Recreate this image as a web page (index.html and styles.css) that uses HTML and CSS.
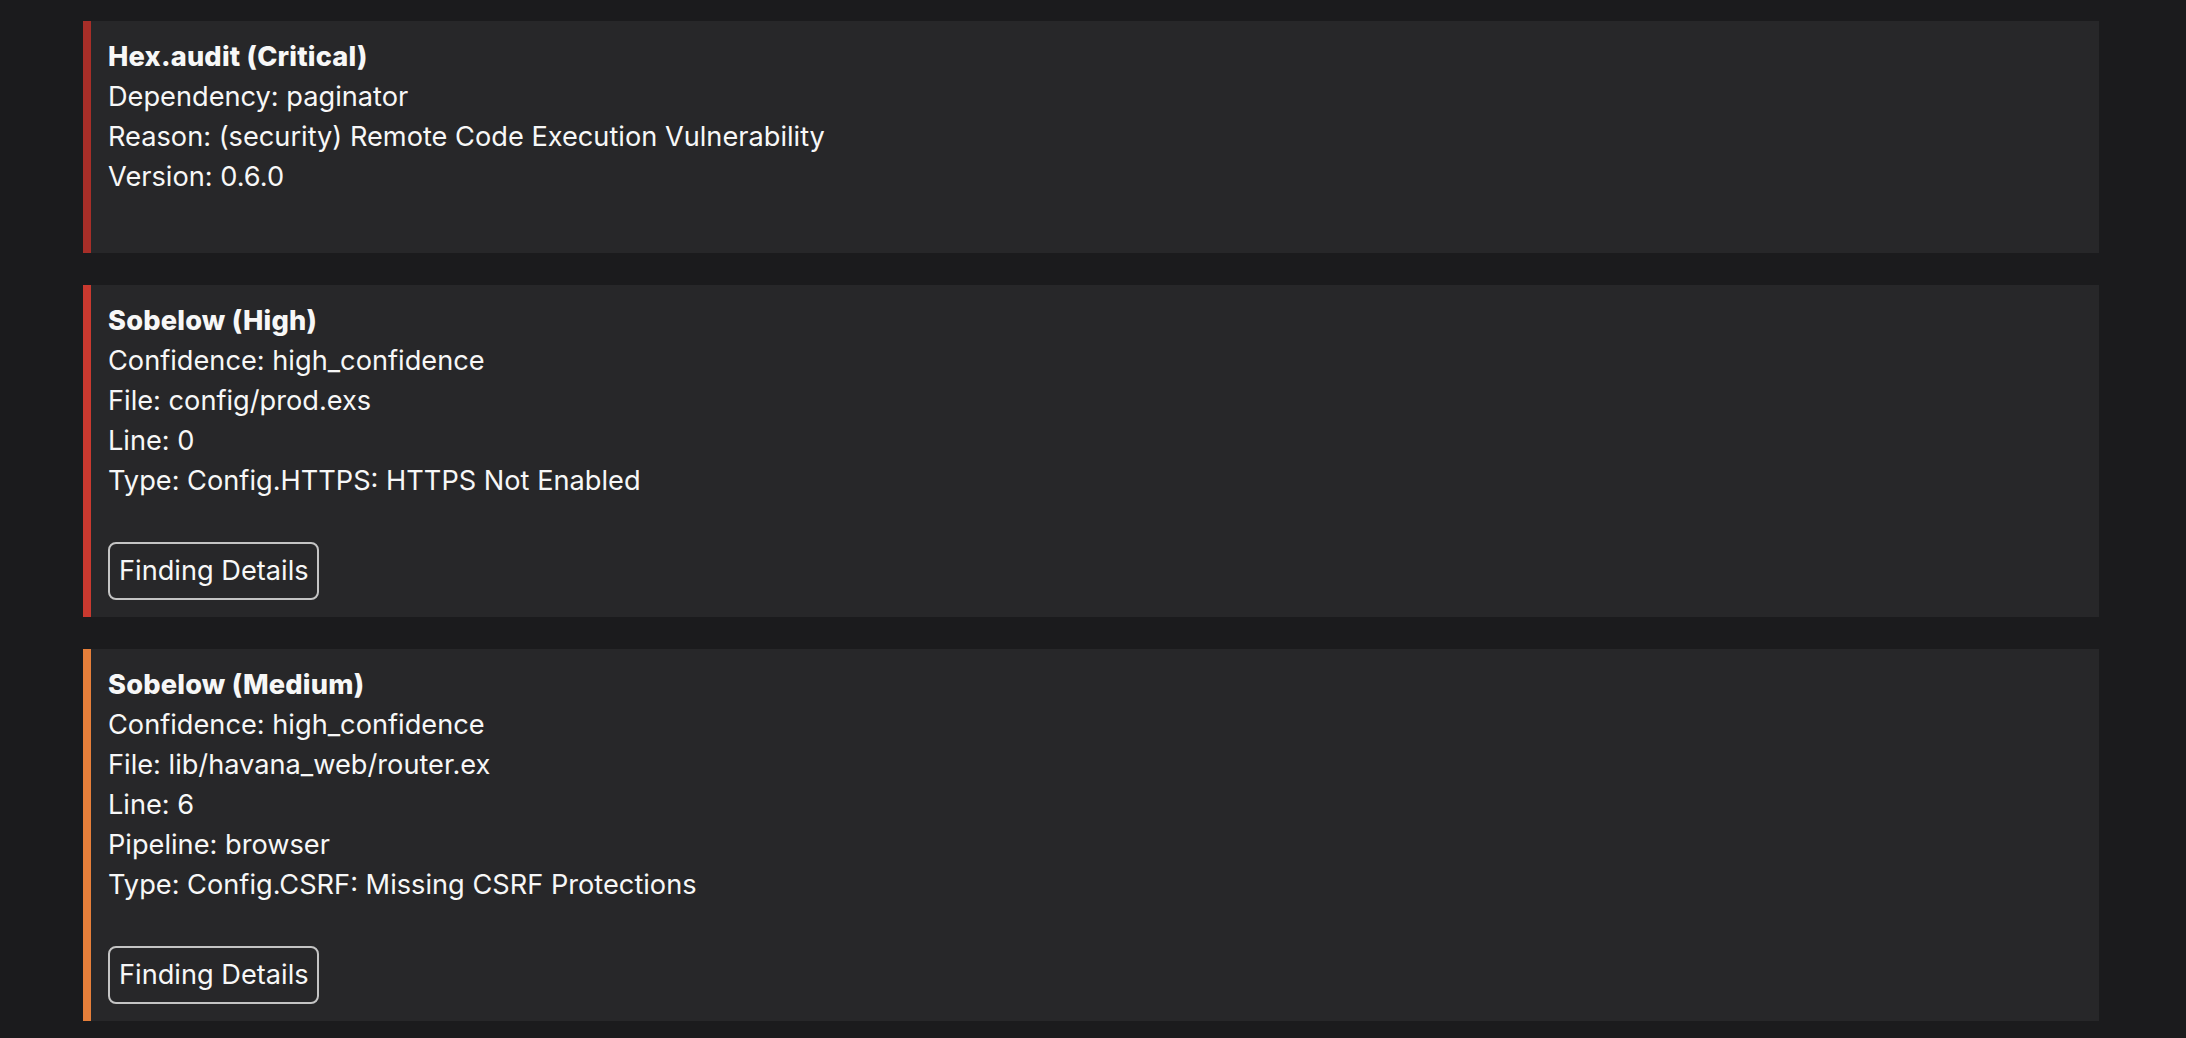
FILE: index.html
```html
<!DOCTYPE html>
<html lang="en">
<head>
    <meta charset="UTF-8">
    <meta name="viewport" content="width=device-width, initial-scale=1.0">
    <title>Findings</title>
    <link rel="stylesheet" href="styles.css">
</head>
<body>
    <div class="findings">
        <div class="finding critical">
            <div class="finding-title">Hex.audit (Critical)</div>
            <div>Dependency: paginator</div>
            <div>Reason: (security) Remote Code Execution Vulnerability</div>
            <div>Version: 0.6.0</div>
            <div class="spacer"></div>
        </div>

        <div class="finding high">
            <div class="finding-title">Sobelow (High)</div>
            <div>Confidence: high_confidence</div>
            <div>File: config/prod.exs</div>
            <div>Line: 0</div>
            <div>Type: Config.HTTPS: HTTPS Not Enabled</div>
            <div class="spacer"></div>
            <button type="button">Finding Details</button>
        </div>

        <div class="finding medium">
            <div class="finding-title">Sobelow (Medium)</div>
            <div>Confidence: high_confidence</div>
            <div>File: lib/havana_web/router.ex</div>
            <div>Line: 6</div>
            <div>Pipeline: browser</div>
            <div>Type: Config.CSRF: Missing CSRF Protections</div>
            <div class="spacer"></div>
            <button type="button">Finding Details</button>
        </div>
    </div>
</body>
</html>
```

FILE: styles.css
```css
body { margin: 0; background: #1b1b1d; color: #f7f7f7; font-family: Inter, "Noto Sans", sans-serif; font-size: 27.2px; line-height: 40px; }
.findings { display: flex; flex-direction: column; gap: 32px; padding: 21px 87px 17px 83px; }
.finding { background: #272729; border-left: 8px solid #c9392f; padding: 16px 16px 16px 17px; display: flex; flex-direction: column; align-items: flex-start; }
.finding.critical { border-left-color: #a72e28; }
.finding.high { border-left-color: #c9392f; }
.finding.medium { border-left-color: #e67f3a; }
.finding-title { font-weight: 800; letter-spacing: 0.2px; }
.spacer { height: 40px; }
button { font: inherit; line-height: 40px; color: #f7f7f7; background: transparent; border: 2px solid #c4c4c4; border-radius: 8px; padding: 7px 8px 7px 9px; margin: 1px 0; cursor: pointer; }
button:hover { background: #333336; }
```
